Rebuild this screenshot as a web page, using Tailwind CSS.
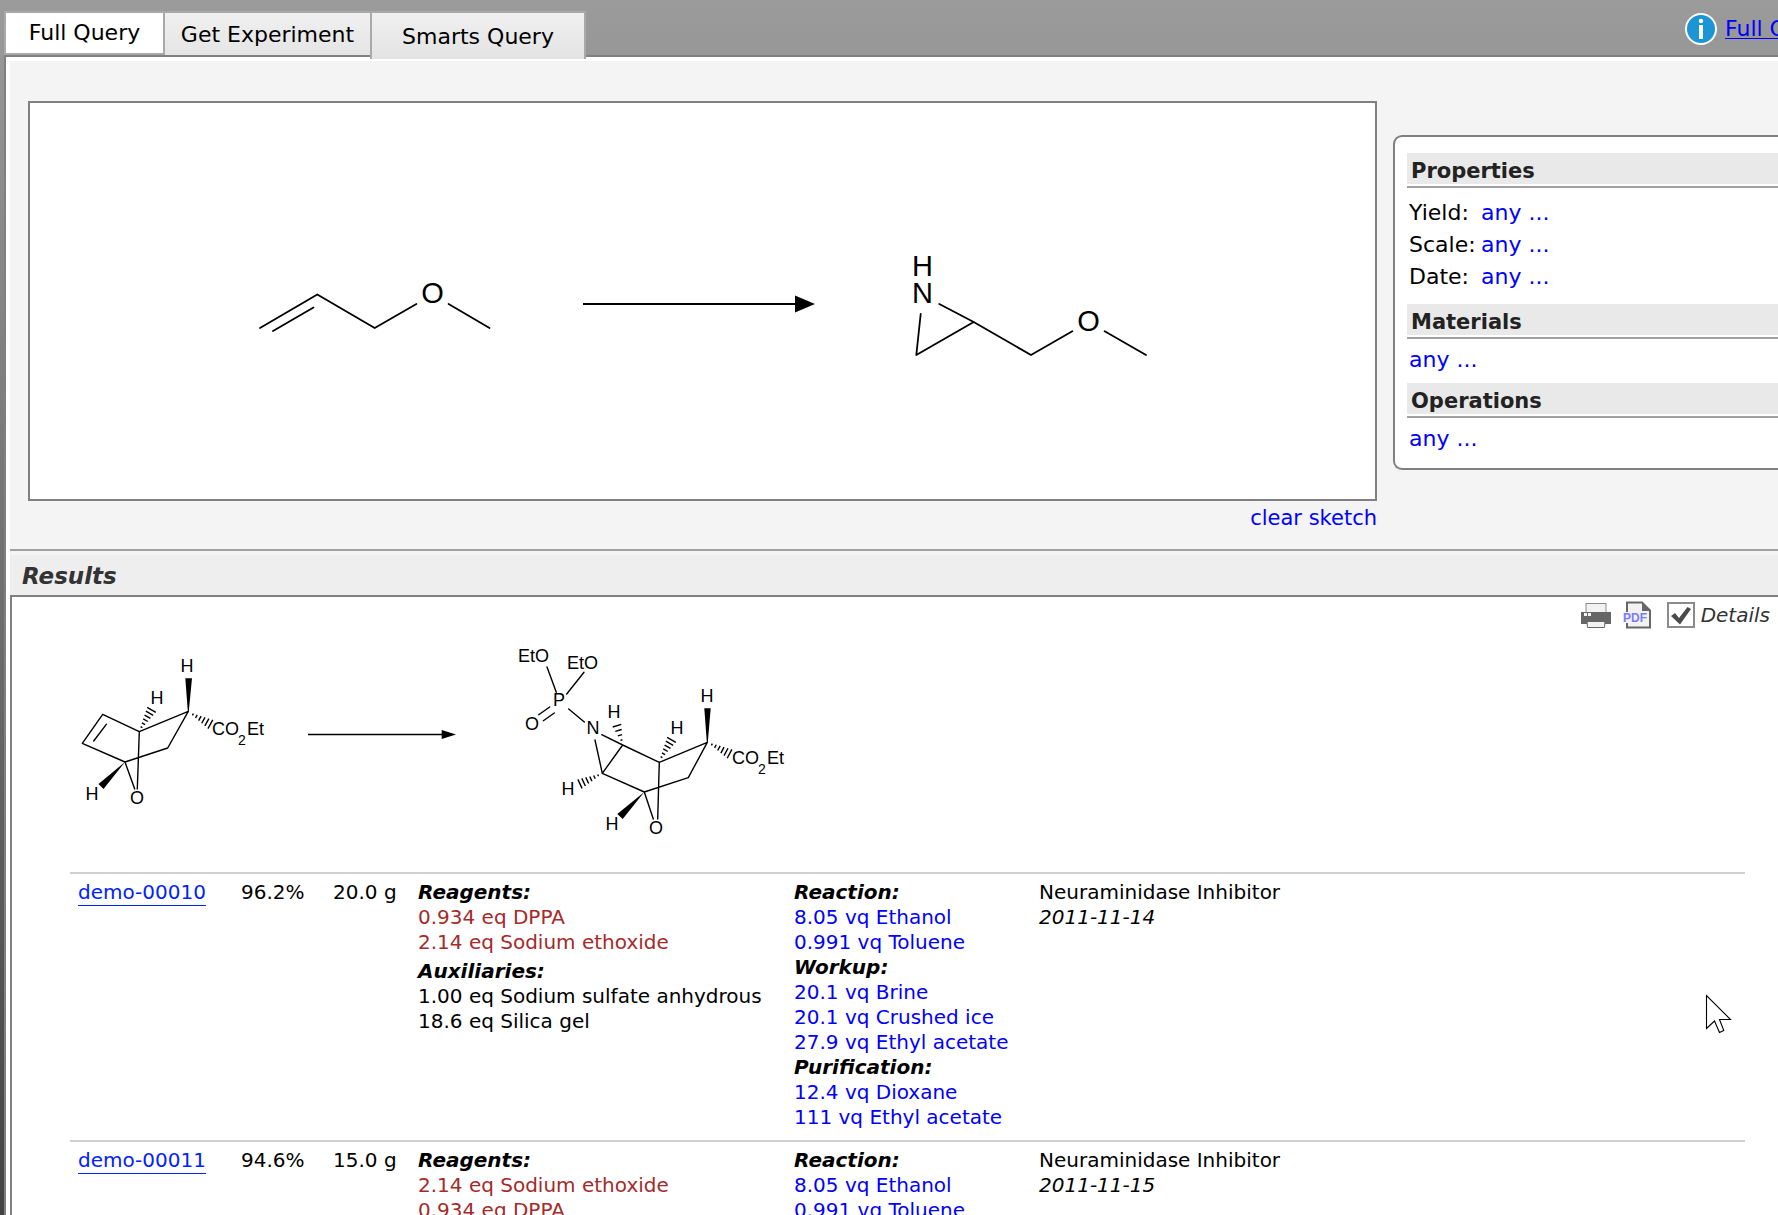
<!DOCTYPE html>
<html lang="en">
<head>
<meta charset="utf-8">
<title>Reaction Query</title>
<script src="https://cdn.jsdelivr.net/npm/@tailwindcss/browser@4"></script>
</head>
<body class="relative flex h-screen flex-col overflow-hidden bg-linear-to-b from-[#9b9b9b] to-[#444444] pl-1 font-['Verdana','DejaVu_Sans',sans-serif] text-black">

<header class="relative z-10 flex h-[55px] shrink-0 items-start pt-[11px]">
  <nav class="flex items-start text-[22px]" aria-label="Query type">
    <button class="h-11 w-[161px] border-2 border-[#a9a9a9] bg-white pb-0.5">Full Query</button>
    <button class="h-11 w-[205px] border-t-2 border-[#a9a9a9] bg-linear-to-b from-[#f0f0f0] to-[#e5e5e5]">Get Experiment</button>
    <button class="h-12 w-[216px] border-x-2 border-t-2 border-[#a9a9a9] bg-linear-to-b from-[#f0f0f0] to-[#e3e3e3]">Smarts Query</button>
  </nav>
  <div class="ml-auto flex w-[93px] items-center gap-2 pt-0.5">
    <svg class="size-8 shrink-0" viewBox="0 0 32 32" aria-hidden="true">
      <circle cx="16" cy="16" r="15" fill="#1b95d3" stroke="#fff" stroke-width="2"/>
      <circle cx="16" cy="8" r="2.2" fill="#fff"/>
      <rect x="14" y="12" width="4" height="14" fill="#fff"/>
    </svg>
    <a href="#" class="text-[22px] leading-8 whitespace-nowrap text-[#0000ff] underline decoration-1 underline-offset-2">Full Query</a>
  </div>
</header>

<main class="flex grow flex-col border-t-2 border-l-2 border-[#808080] bg-white pt-1 pl-1">
  <section class="flex shrink-0 items-start gap-4 border-b-2 border-[#a0a0a0] bg-[#f4f4f4] pt-10 pb-[15px] pl-[18px]">
    <div class="flex shrink-0 flex-col">
      <svg class="box-border h-[400px] w-[1349px] border-2 border-[#808080] bg-white" viewBox="30 103 1345 396" role="img" aria-label="Reaction sketch">
        <g fill="none" stroke="#000" stroke-width="1.8" stroke-linecap="round" stroke-linejoin="round">
          <path d="M260 328L317.3 294.5L374.7 328L416.4 304M448.6 304L489.5 328M273 331L313.5 307.5"/>
          <path d="M939.3 304L973.7 322L1031 355L1072.3 331.3M973.7 322L916.3 355L920.7 314M1104.7 331.3L1146 355"/>
        </g>
        <path d="M583 304H797" stroke="#000" stroke-width="2"/>
        <path d="M795 295.500L815 304L795 312.500Z"/>
        <g class="font-['Liberation_Sans',sans-serif] text-[29px]" text-anchor="middle">
          <text x="432.500" y="303">O</text>
          <text x="922.500" y="276">H</text>
          <text x="922.500" y="303">N</text>
          <text x="1088.500" y="331">O</text>
        </g>
      </svg>
      <a href="#" class="self-end pt-px text-[21px] leading-8 text-[#0000ff]">clear sketch</a>
    </div>

    <aside class="mt-[34px] min-w-0 grow rounded-l-[9px] border-2 border-r-0 border-[#808080] bg-white pt-4 pb-[13px] pl-3 text-[22px] leading-8">
      <h2 class="h-[31px] bg-[#e9e9e9] pt-[5px] pl-1 text-[21px] leading-[26px] font-bold text-[#222]">Properties</h2>
      <div class="mt-0.5 h-0.5 bg-[#a0a0a0]"></div>
      <dl class="grid grid-cols-[72px_1fr] pt-[9px] pb-[11px] pl-0.5">
        <dt>Yield:</dt><dd><a href="#" class="text-[#0000ff]">any ...</a></dd>
        <dt>Scale:</dt><dd><a href="#" class="text-[#0000ff]">any ...</a></dd>
        <dt>Date:</dt><dd><a href="#" class="text-[#0000ff]">any ...</a></dd>
      </dl>
      <h2 class="h-[31px] bg-[#e9e9e9] pt-[5px] pl-1 text-[21px] leading-[26px] font-bold text-[#222]">Materials</h2>
      <div class="mt-0.5 h-0.5 bg-[#a0a0a0]"></div>
      <p class="pt-[5px] pb-[7px] pl-0.5"><a href="#" class="text-[#0000ff]">any ...</a></p>
      <h2 class="h-[31px] bg-[#e9e9e9] pt-[5px] pl-1 text-[21px] leading-[26px] font-bold text-[#222]">Operations</h2>
      <div class="mt-0.5 h-0.5 bg-[#a0a0a0]"></div>
      <p class="pt-[5px] pl-0.5"><a href="#" class="text-[#0000ff]">any ...</a></p>
    </aside>
  </section>

  <h1 class="h-11 shrink-0 border-t-4 border-[#f4f4f4] bg-[#eeeeee] pt-px pl-3 text-[23px] leading-10 font-bold text-[#333] italic">Results</h1>

  <section class="grow border-t-2 border-l-2 border-[#808080] bg-white">
    <div class="flex items-start justify-between pr-2">
      <svg class="h-[275px] w-[900px] shrink-0" viewBox="12 597 900 275" role="img" aria-label="Matched reaction">
        <defs>
          <path id="hash" d="M1 -1V1M5 -1.800V1.800M9 -2.600V2.600M13 -3.400V3.400M17 -4.200V4.200M21 -5V5" fill="none" stroke="#000" stroke-width="1.400"/>
          <path id="hash-short" d="M1 -1V1M6 -2.200V2.200M11 -3.300V3.300M16 -4.500V4.500" fill="none" stroke="#000" stroke-width="1.400"/>
        </defs>
        <g fill="none" stroke="#000" stroke-width="1.4" stroke-linecap="round" stroke-linejoin="round">
          <path d="M102.700 714.300L82.300 743.300L125 762L167.700 748L188.300 711.300L139.300 731.700ZM106.300 724.300L93.700 741M139.300 731.700L137.300 789M125 762L134.700 789"/>
          <path d="M547 667L556.300 692.300M584 672.300L566.700 694M568.700 709L584.300 722M549.700 707L538.700 714.700M554.300 713L543.300 720.700"/>
          <path d="M601.700 734.700L622.700 745L602.300 773.300L595 740M622.700 745L659.300 762.300L707.300 742.300L688.300 777.700L644.300 792L602.300 773.300M659.300 762.300L657.700 819M644.300 792L653.300 819"/>
        </g>
        <path d="M185.300 678.300H192L188.800 711.300H187.800ZM125 762L98.500 784L103.500 789ZM704.300 708.300H710.700L707.800 742.300H706.800ZM644.300 792L617.300 814L622.700 819Z"/>
        <use href="#hash" transform="translate(141 728) rotate(-60)"/>
        <use href="#hash" transform="translate(192 714) rotate(29)"/>
        <use href="#hash-short" transform="translate(621.700 741) rotate(-107)"/>
        <use href="#hash" transform="translate(599 775) rotate(155)"/>
        <use href="#hash" transform="translate(661 758) rotate(-60)"/>
        <use href="#hash" transform="translate(711 744) rotate(28)"/>
        <path d="M308 734.500H443" stroke="#000" stroke-width="1.600"/>
        <path d="M441.700 730L456 734.500L441.700 739Z"/>
        <g class="font-['Liberation_Sans',sans-serif] text-[18px]">
          <g text-anchor="middle">
            <text x="187" y="672">H</text>
            <text x="157" y="704">H</text>
            <text x="92" y="800">H</text>
            <text x="137" y="804">O</text>
            <text x="559" y="706">P</text>
            <text x="532" y="730">O</text>
            <text x="593" y="734">N</text>
            <text x="614" y="718">H</text>
            <text x="677" y="734">H</text>
            <text x="707" y="702">H</text>
            <text x="568" y="795">H</text>
            <text x="612" y="830">H</text>
            <text x="656" y="834">O</text>
          </g>
          <text x="212" y="735">CO</text>
          <text x="238" y="745" class="text-[14px]">2</text>
          <text x="247" y="735">Et</text>
          <text x="732" y="764">CO</text>
          <text x="758" y="774" class="text-[14px]">2</text>
          <text x="767" y="764">Et</text>
          <text x="518" y="662">EtO</text>
          <text x="567" y="669">EtO</text>
        </g>
      </svg>
      <div class="flex items-center pt-1">
        <button aria-label="Print" class="mr-3">
          <svg class="h-7 w-[30px]" viewBox="0 0 30 28">
            <rect x="5" y="2.500" width="20" height="10" fill="#f2f2f2" stroke="#8b8b8b"/>
            <path d="M0 11H30V23H0Z" fill="#666"/>
            <path d="M3 12H6V15H3ZM7 12H10V15H7Z" fill="#f5f5f5"/>
            <path d="M6 20.500H24L23.500 26.500H6.500Z" fill="#f2f2f2" stroke="#666"/>
          </svg>
        </button>
        <button aria-label="Export PDF" class="mr-4">
          <svg class="h-7 w-7" viewBox="0 0 28 28">
            <path d="M4 1H20L27 9V27H4Z" fill="#f2f2f2"/>
            <path d="M4 11V1.500H19L27 9.500V26.500H4V22" fill="none" stroke="#666" stroke-width="2"/>
            <path d="M19 1V10H28Z" fill="#666"/>
            <rect x="0" y="11" width="24" height="11" fill="#f2f2f2"/>
            <text x="0" y="21" class="font-['Liberation_Sans',sans-serif] text-[12px] font-bold" fill="#7b7bff">PDF</text>
          </svg>
        </button>
        <label class="flex items-center gap-1.5 text-[20px] leading-7 text-[#333] italic">
          <span class="grid">
            <input type="checkbox" checked class="col-start-1 row-start-1 h-[26px] w-7 appearance-none border-2 border-[#8b8b8b] bg-white">
            <svg class="pointer-events-none col-start-1 row-start-1 h-[26px] w-7" viewBox="0 0 28 26" aria-hidden="true">
              <path d="M4 14L8 11L12 16L20.500 5L24 7L13 22.500Z" fill="#4a4a4a"/>
            </svg>
          </span>
          Details
        </label>
      </div>
    </div>

    <div class="pr-[33px] pl-[58px]">
      <table class="w-full table-fixed text-left text-[20px] leading-[25px]">
        <colgroup>
          <col class="w-[163px]"><col class="w-[92px]"><col class="w-[85px]"><col class="w-[376px]"><col class="w-[245px]"><col>
        </colgroup>
        <tbody>
          <tr class="border-t-2 border-[#d0d0d0] align-top">
            <td class="px-2 pt-1.5 pb-2.5"><a href="#" class="inline-block border-b border-[#0022ff] text-[#0022ff]">demo-00010</a></td>
            <td class="pt-1.5 pl-2">96.2%</td>
            <td class="pt-1.5 pl-2 whitespace-nowrap">20.0 g</td>
            <td class="pt-1.5 pl-2 whitespace-nowrap">
              <h3 class="font-bold italic">Reagents:</h3>
              <p class="text-[#a52a2a]">0.934 eq DPPA<br>2.14 eq Sodium ethoxide</p>
              <h3 class="mt-1 font-bold italic">Auxiliaries:</h3>
              <p>1.00 eq Sodium sulfate anhydrous<br>18.6 eq Silica gel</p>
            </td>
            <td class="pt-1.5 pb-2.5 pl-2 whitespace-nowrap">
              <h3 class="font-bold italic">Reaction:</h3>
              <p class="text-[#0000ff]">8.05 vq Ethanol<br>0.991 vq Toluene</p>
              <h3 class="font-bold italic">Workup:</h3>
              <p class="text-[#0000ff]">20.1 vq Brine<br>20.1 vq Crushed ice<br>27.9 vq Ethyl acetate</p>
              <h3 class="font-bold italic">Purification:</h3>
              <p class="text-[#0000ff]">12.4 vq Dioxane<br>111 vq Ethyl acetate</p>
            </td>
            <td class="pt-1.5 pl-2">Neuraminidase Inhibitor<br><i>2011-11-14</i></td>
          </tr>
          <tr class="border-t-2 border-[#d0d0d0] align-top">
            <td class="px-2 pt-1.5"><a href="#" class="inline-block border-b border-[#0022ff] text-[#0022ff]">demo-00011</a></td>
            <td class="pt-1.5 pl-2">94.6%</td>
            <td class="pt-1.5 pl-2 whitespace-nowrap">15.0 g</td>
            <td class="pt-1.5 pl-2 whitespace-nowrap">
              <h3 class="font-bold italic">Reagents:</h3>
              <p class="text-[#a52a2a]">2.14 eq Sodium ethoxide<br>0.934 eq DPPA</p>
            </td>
            <td class="pt-1.5 pl-2 whitespace-nowrap">
              <h3 class="font-bold italic">Reaction:</h3>
              <p class="text-[#0000ff]">8.05 vq Ethanol<br>0.991 vq Toluene</p>
            </td>
            <td class="pt-1.5 pl-2">Neuraminidase Inhibitor<br><i>2011-11-15</i></td>
          </tr>
        </tbody>
      </table>
    </div>
  </section>
</main>

<!-- mouse pointer -->
<svg class="pointer-events-none absolute top-[994px] left-[1705px] h-10 w-7" viewBox="0 0 28 40" aria-hidden="true">
  <path d="M1.500 1.500V34.500L9.500 27L14.500 38.500L18.800 36.500L14.500 25.500H25.500Z" fill="#fff" stroke="#000" stroke-width="1.100"/>
</svg>
</body>
</html>
